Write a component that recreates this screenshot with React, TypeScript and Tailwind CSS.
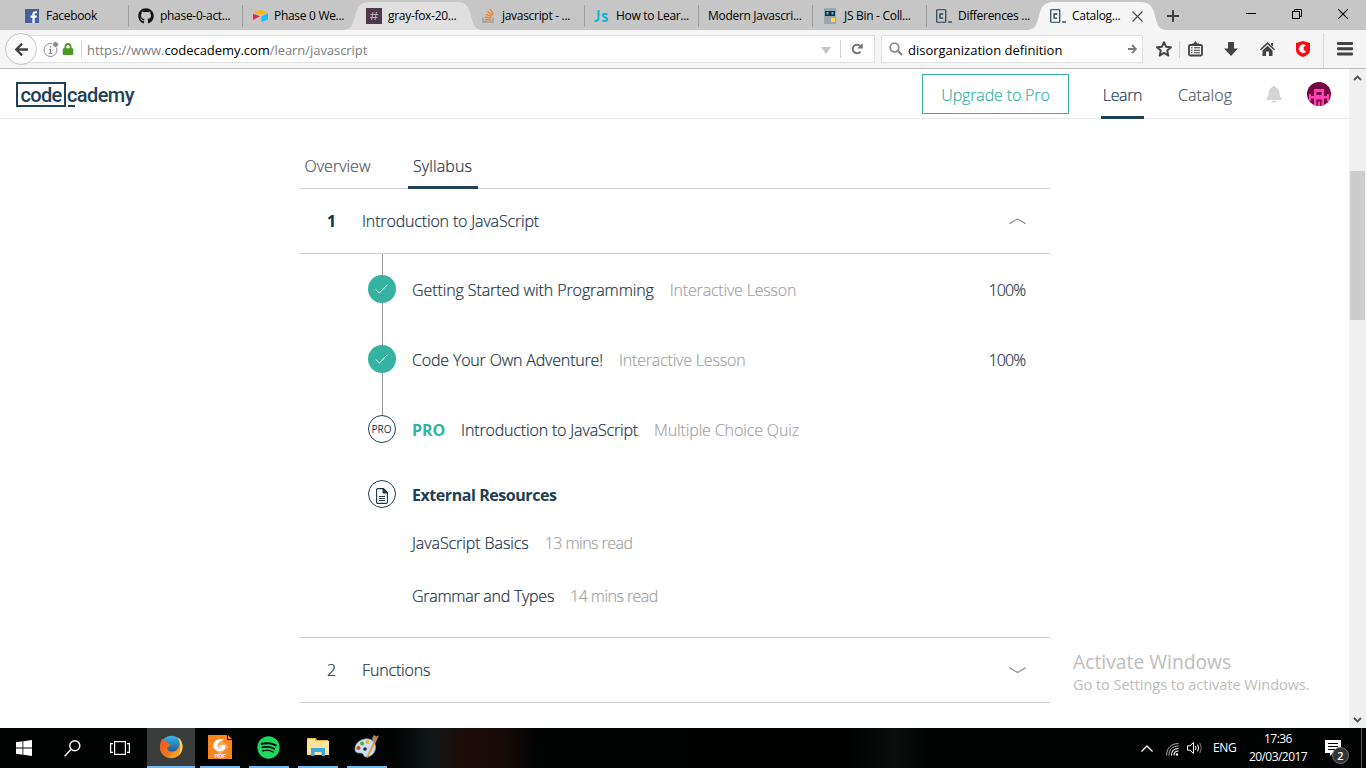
import React from "react";
import { FaArrowLeft, FaGithub, FaLock, FaSpotify } from "react-icons/fa";

const TAB_SHAPE = "M0 28C9 27 9 20 11 14C13 5 16 0 26 0H112C122 0 125 5 127 14C129 20 129 27 138 28Z";

function CodecademyMark() {
  return (
    <svg width="17" height="14" viewBox="0 0 17 14" fill="none" stroke="#204056">
      <rect x="0.75" y="0.75" width="9" height="12.5" rx=".5" strokeWidth="1.2" />
      <path d="M7.200 5H4V9.200H7.200" strokeWidth="1.3" />
      <path d="M12 13h4" strokeWidth="1.300" />
    </svg>
  );
}

type TabInfo = { label: string; icon?: React.ReactNode; shade?: string; close?: boolean };

const tabs: TabInfo[] = [
  {
    label: "Facebook",
    icon: (
      <svg className="-ml-[2px]" width="14" height="14" viewBox="0 0 14 14">
        <rect width="14" height="14" fill="#4460a0" />
        <path d="M9.7 14V8.8h1.9l.3-2.2H9.7V5.3c0-.6.2-1 1.1-1H12v-2A15 15 0 0 0 10.300 2.200C8.600 2.200 7.400 3.200 7.400 5.100v1.500H5.500v2.200h1.900V14z" fill="#fff" />
      </svg>
    ),
  },
  { label: "phase-0-act...", icon: <FaGithub className="-ml-[2px]" size={16} color="#181616" /> },
  {
    label: "Phase 0 We...",
    icon: (
      <svg width="15" height="12" viewBox="0 0 15 12">
        <path d="M1 2.500L7.500 0L14.500 2.500L7.500 5z" fill="#fcb400" />
        <path d="M8.300 6L15 3.600V9.600L8.300 12z" fill="#18bfff" />
        <path d="M0 3.700L7 6.200L0 10z" fill="#e8254f" />
      </svg>
    ),
  },
  {
    label: "gray-fox-20...",
    shade: "fill-[#dfdfdf]",
    icon: (
      <svg className="-ml-[2px]" width="16" height="16" viewBox="0 0 16 16">
        <rect width="16" height="16" fill="#4d394b" />
        <path d="M7 4L5.600 12M10.400 4L9 12M4.500 6.500H12M4 9.500H11.500" stroke="#b7a9b5" strokeWidth="1.100" />
      </svg>
    ),
  },
  {
    label: "javascript - ...",
    icon: (
      <svg className="-mt-[1px]" width="13" height="15" viewBox="0 0 13 15" fill="none">
        <path d="M1 9.500V14H11V9.500" stroke="#9a9c9f" strokeWidth="1.300" />
        <path d="M2.800 11.800H9.200M3 9.200L9.400 10M3.800 6.300L9.900 8.300M5.500 3.500L10.800 7.200M8 1.200L11.600 6.300" stroke="#f48024" strokeWidth="1.400" />
      </svg>
    ),
  },
  {
    label: "How to Lear...",
    icon: (
      <svg className="-ml-[3px]" width="16" height="14" viewBox="0 0 16 14" fill="none" stroke="#18b1d0" strokeWidth="2">
        <path d="M5.500 1V9.500C5.500 11.500 4.500 12 1.500 12" />
        <path d="M14.500 5.500C12 4.500 9.800 5 9.800 6.500C9.800 8.500 14.300 8 14.300 10.200C14.300 12.300 11.500 12.300 9.300 11.600" />
      </svg>
    ),
  },
  { label: "Modern Javascri..." },
  {
    label: "JS Bin - Coll...",
    icon: (
      <svg className="-ml-[1px]" width="12" height="16" viewBox="0 0 12 16">
        <rect width="12" height="16" fill="#9ba7ae" />
        <rect x="1" y="3" width="10" height="5" fill="#17303d" />
        <rect x="2.500" y="4" width="2" height="2.500" fill="#3fc1ee" />
        <rect x="7.500" y="4" width="2" height="2.500" fill="#3fc1ee" />
        <rect x="7" y="10" width="4" height="4" fill="#f7dc3b" />
      </svg>
    ),
  },
  { label: "Differences ...", icon: <CodecademyMark /> },
  { label: "Catalog...", icon: <CodecademyMark />, shade: "fill-[#f5f5f5]", close: true },
];

function BrowserTab({ tab, divider }: { tab: TabInfo; divider: boolean }) {
  return (
    <div className="relative flex h-[30px] w-[114px] shrink-0 items-center pt-[2px]">
      {tab.shade && (
        <svg className={"absolute -left-[12px] top-[2px] " + tab.shade} width="138" height="28" viewBox="0 0 138 28">
          <path d={TAB_SHAPE} />
        </svg>
      )}
      {divider && <span className="absolute right-[-1px] top-[5px] h-[22px] w-px bg-[#9d9d9d]" />}
      {tab.icon && <span className="relative ml-[10px] flex w-[17px] justify-center">{tab.icon}</span>}
      <span className={"relative whitespace-nowrap text-[12px] tracking-[-0.3px] text-black " + (tab.icon ? "ml-[5px]" : "ml-[10px]")}>{tab.label}</span>
      {tab.close && (
        <svg className="relative ml-[12px]" width="11" height="11" viewBox="0 0 11 11">
          <path d="M.5 .5L10.500 10.500M10.500 .5L.5 10.500" stroke="#4c4c4c" strokeWidth="1.200" />
        </svg>
      )}
    </div>
  );
}

function TabStrip() {
  return (
    <div className="flex h-[30px] bg-[#c6c6c6] pl-[14px]">
      {tabs.map((t, i) => (
        <BrowserTab key={t.label} tab={t} divider={i !== 2 && i !== 3 && i < 8} />
      ))}
      <div className="flex h-[30px] flex-1 items-center">
        <svg className="ml-[13px] mt-[2px]" width="12" height="12" viewBox="0 0 12 12">
          <path d="M6 0V12M0 6H12" stroke="#3f3f3f" strokeWidth="2" />
        </svg>
        <svg className="-mt-[2px] ml-[67px]" width="10" height="10" viewBox="0 0 10 10"><path d="M0 4.500H10" stroke="#000" /></svg>
        <svg className="-mt-[2px] ml-[36px]" width="10" height="10" viewBox="0 0 10 10" fill="none" stroke="#000">
          <rect x=".5" y="2.500" width="7" height="7" />
          <path d="M2.500 2.500V.5H9.500V7.500H7.500" />
        </svg>
        <svg className="-mt-[2px] ml-[36px]" width="10" height="10" viewBox="0 0 10 10"><path d="M.2 .2L9.800 9.800M9.800 .2L.2 9.800" stroke="#000" strokeWidth="1.100" /></svg>
      </div>
    </div>
  );
}

function Toolbar() {
  return (
    <div className="flex h-[39px] items-start border-b border-[#bcbcbc] bg-[#f5f5f5] pl-[5px] pt-[3px]">
      <div className="relative z-10 flex size-[32px] shrink-0 items-center justify-center rounded-full border border-[#c6c6c6] bg-[#fafafa]">
        <FaArrowLeft size={15} color="#404040" />
      </div>
      <div className="-ml-[10px] mt-[2px] flex h-[28px] w-[848px] shrink-0 items-center border border-[#e0e0e0] bg-white pl-[14px]">
        <svg className="mt-[1px]" width="18" height="18" viewBox="0 0 18 18" fill="none">
          <circle cx="8.500" cy="9" r="6.500" stroke="#8e8e8e" />
          <path d="M8.500 8V12.500M7 8.300H9M6.800 12.300H10.200M8.500 5V6.500" stroke="#8e8e8e" strokeWidth="1.300" />
          <circle cx="13.500" cy="3.500" r="3" fill="#8a8a8a" stroke="#fff" />
        </svg>
        <FaLock className="ml-[2px]" size={12} color="#4c9a22" />
        <span className="ml-[7px] h-[18px] w-px bg-[#d0d0d0]" />
        <span className="ml-[5px] whitespace-nowrap pt-[3px] text-[13px] tracking-[-0.05px] text-[#7d7d7d]">
          https://www.<span className="text-black">codecademy.com</span>/learn/javascript
        </span>
        <svg className="ml-auto mt-[2px]" width="10" height="7" viewBox="0 0 10 7"><path d="M0 0H10L5 7z" fill="#c6c6c6" /></svg>
        <span className="ml-[9px] h-[18px] w-px bg-[#d0d0d0]" />
        <svg className="ml-[10px] mr-[11px]" width="12" height="12" viewBox="0 0 12 12">
          <path d="M9.500 8.600A4.300 4.300 0 1 1 9 2.800" fill="none" stroke="#737373" strokeWidth="1.900" />
          <path d="M11.800 0V5.500H6.200z" fill="#737373" />
        </svg>
      </div>
      <div className="ml-[6px] mt-[2px] flex h-[28px] w-[262px] shrink-0 items-center border border-[#e0e0e0] bg-white px-[7px]">
        <svg className="-mt-[1px]" width="14" height="14" viewBox="0 0 14 14" fill="none" stroke="#8a8a8a">
          <circle cx="5.500" cy="5.500" r="4.300" strokeWidth="1.800" />
          <path d="M8.700 8.700L13 13" strokeWidth="2.400" />
        </svg>
        <span className="ml-[5px] whitespace-nowrap pt-[3px] text-[13px] text-black">disorganization definition</span>
        <svg className="-mr-[2px] ml-auto" width="9" height="10" viewBox="0 0 9 10" fill="none" stroke="#7d7d7d" strokeWidth="1.800">
          <path d="M0 5H8M4 1L8 5L4 9" />
        </svg>
      </div>
      <div className="flex h-[35px] flex-1 items-center pb-[3px]">
        <svg className="ml-[13px]" width="16" height="16" viewBox="0 0 16 16" fill="none" stroke="#424242" strokeWidth="1.900" strokeLinejoin="round">
          <path d="M8 1.200L10 5.700L15 6.200L11.200 9.500L12.400 14.600L8 11.900L3.600 14.600L4.800 9.500L1 6.200L6 5.700z" />
        </svg>
        <span className="ml-[7px] h-[17px] w-px bg-[#cfcfcf]" />
        <svg className="ml-[8px]" width="15" height="16" viewBox="0 0 15 16" fill="none" stroke="#424242">
          <rect x="1" y="4" width="13" height="10.500" rx="1.200" strokeWidth="1.800" />
          <path d="M4 3.500H6L7.500 1.500L9 3.500H11" strokeWidth="1.800" />
          <path d="M3 6.800H4.500M6 6.800H12M3 9.300H4.500M6 9.300H12M3 11.800H4.500M6 11.800H12" strokeWidth="1.100" />
        </svg>
        <svg className="ml-[21px]" width="14" height="14" viewBox="0 0 14 14"><path d="M4 0.500Q4 0 4.500 0H9.500Q10 0 10 .5V6.500H14L7 14L0 6.500H4z" fill="#424242" /></svg>
        <svg className="ml-[22px]" width="15" height="14" viewBox="0 0 15 14" fill="#424242">
          <path d="M0 7.300L7.500 0L15 7.300L14 8.300L7.500 2.200L1 8.300z" />
          <path d="M2.500 8.500L7.500 3.800L12.500 8.500V14H9V9.500H6V14H2.500z" />
          <path d="M11 1H13V4.500L11 2.700z" />
        </svg>
        <svg className="ml-[21px]" width="14" height="16" viewBox="0 0 14 16">
          <path d="M7 0L14 2V9C14 12.500 10.500 15 7 16C3.500 15 0 12.500 0 9V2z" fill="#f80a12" />
          <path d="M9.800 10.800A4 4 0 1 1 9.800 4.700C6.500 4.500 6.500 10 9.800 10.800z" fill="#fff" stroke="#fff" strokeWidth=".6" />
        </svg>
        <span className="-mb-[2px] ml-[13px] h-[35px] w-px bg-[#d8d8d8]" />
        <svg className="ml-[13px]" width="16" height="14" viewBox="0 0 16 14" fill="#424242">
          <rect width="16" height="3" rx="1" /><rect y="5.200" width="16" height="3" rx="1" /><rect y="10.400" width="16" height="3" rx="1" />
        </svg>
      </div>
    </div>
  );
}

function SiteHeader() {
  return (
    <header className="flex h-[50px] items-start border-b border-[#e9e9e9] pl-[16px]">
      <div className="mt-[13px] flex font-['Roboto'] text-[20px] font-medium leading-[22px] text-[#204056]">
        <span className="flex h-[25px] w-[50px] justify-center border-2 border-[#204056] tracking-[-0.75px]">code</span>
        <span className="relative ml-[1px] mt-[2px] tracking-[-0.6px]">
          cademy
          <span className="absolute left-[1px] top-[21px] h-[2px] w-[7px] bg-[#204056]" />
        </span>
      </div>
      <nav className="ml-auto flex text-[16px] font-light [-webkit-text-stroke:0.2px]">
        <button className="mt-[5px] flex h-[40px] w-[147px] items-center justify-center whitespace-nowrap border border-[#35b2a0] pt-[2px] tracking-[-0.15px] text-[#35b2a0]">Upgrade to Pro</button>
        <a className="ml-[32px] flex h-[50px] w-[43px] items-center justify-center border-b-[3px] border-[#204056] pt-[5px] tracking-[-0.35px] text-[#204056]">Learn</a>
        <a className="ml-[33px] flex h-[50px] w-[56px] items-center justify-center pt-[2px] tracking-[0.1px] text-[#4d5763]">Catalog</a>
        <svg className="ml-[33px] mt-[17px]" width="16" height="18" viewBox="0 0 16 18" fill="#d3d4d6">
          <path d="M8 0C9 0 9.500 .6 9.500 1.300C12 2 13.400 4 13.400 6.500C13.400 10 14 11 15.500 12.300Q16 14 14.500 14H1.500Q0 14 .5 12.300C2 11 2.600 10 2.600 6.500C2.600 4 4 2 6.500 1.300C6.500 .6 7 0 8 0z" />
          <path d="M5.500 14.800H10.500A2.500 2 0 0 1 5.500 14.800z" />
        </svg>
        <svg className="ml-[25px] mr-[18px] mt-[13px]" width="24" height="24" viewBox="0 0 24 24">
          <clipPath id="avatar"><circle cx="12" cy="12" r="12" /></clipPath>
          <g clipPath="url(#avatar)">
            <rect width="24" height="24" fill="#75083f" />
            <path d="M7 7H17V14H20V12H22V19H20V16.500H17V24H14.500V17.500H9.500V24H7V16.500H4V19H2V12H4V14H7z" fill="#ff41b4" />
            <path d="M9.500 10H14.500V13H9.500z" fill="#75083f" />
            <path d="M11 19.500H13V24H11z" fill="#ff41b4" />
          </g>
        </svg>
      </nav>
    </header>
  );
}

function CheckDot() {
  return (
    <span className="relative flex size-[28px] shrink-0 items-center justify-center rounded-full bg-[#35b2a0]">
      <svg width="13" height="10" viewBox="0 0 13 10" fill="none" stroke="#fff" strokeWidth="1"><path d="M.5 5.300L4.300 9L12.500 .7" /></svg>
    </span>
  );
}

function SectionRow({ n, title, open }: { n: string; title: string; open?: boolean }) {
  return (
    <div className="flex h-[65px] items-center border-b border-[#d0d0d0] pl-[27.5px] pr-[24px]">
      <span className={"w-[35px] " + (open ? "font-bold" : "font-light")}>{n}</span>
      <span className="tracking-[-0.16px]">{title}</span>
      <svg className="ml-auto" width="17" height="7" viewBox="0 0 17 7" fill="none" stroke="#999" strokeWidth="1.400">
        <path d={open ? "M.3 5.600L8.500 1L16.700 5.600" : "M.3 .7L8.500 5.500L16.700 .7"} />
      </svg>
    </div>
  );
}

function Lesson({ title, kind, percent, track = "" }: { title: string; kind: string; percent: string; track?: string }) {
  return (
    <div className="flex h-[70px] items-center pl-[68px] pr-[24px]">
      <CheckDot />
      <span className={"ml-[16.5px] pt-[2px] " + track}>{title}</span>
      <span className="ml-[16px] pt-[2px] tracking-[-0.19px] text-[#a3a3a3]">{kind}</span>
      <span className="ml-auto pt-[2px] tracking-[-0.8px]">{percent}</span>
    </div>
  );
}

function Resource({ title, time, className, track }: { title: string; time: string; className: string; track: string }) {
  return (
    <div className={"flex items-center pl-[112.5px] leading-[24px] " + className}>
      <span className={track}>{title}</span>
      <span className="ml-[16px] tracking-[-0.55px] text-[#a3a3a3]">{time}</span>
    </div>
  );
}

function Syllabus() {
  return (
    <section className="mx-auto w-[750px] whitespace-nowrap pt-[25px] text-[16px] font-light text-[#1c3347] [-webkit-text-stroke:0.2px]">
      <div className="flex h-[45px] border-b border-[#d0d0d0]">
        <span className="flex h-[43px] w-[76px] items-center justify-center text-[#4d5763]">Overview</span>
        <span className="ml-[32px] flex h-[45px] w-[70px] items-center justify-center border-b-[3px] border-[#204056] pt-[1px] tracking-[0.1px]">Syllabus</span>
      </div>
      <SectionRow n="1" title="Introduction to JavaScript" open />
      <div className="relative h-[384px] border-b border-[#d0d0d0]">
        <span className="absolute left-[82px] top-0 h-[161px] w-px bg-[#9b9b9b]" />
        <Lesson title="Getting Started with Programming" kind="Interactive Lesson" percent="100%" track="tracking-[-0.1px]" />
        <Lesson title="Code Your Own Adventure!" kind="Interactive Lesson" percent="100%" track="tracking-[-0.18px]" />
        <div className="flex h-[70px] items-center pl-[68px]">
          <span className="relative flex size-[28px] items-center justify-center rounded-full border border-[#204056] bg-white text-[10px] font-normal [-webkit-text-stroke:0px]">PRO</span>
          <span className="ml-[16.5px] pt-[2px] font-bold tracking-[-0.1px] text-[#35b2a0] [-webkit-text-stroke:0px]">PRO</span>
          <span className="ml-[16px] pt-[2px] tracking-[-0.16px]">Introduction to JavaScript</span>
          <span className="ml-[16px] pt-[2px] tracking-[-0.13px] text-[#a3a3a3]">Multiple Choice Quiz</span>
        </div>
        <div className="flex h-[60px] items-center pl-[68px]">
          <span className="flex size-[28px] items-center justify-center rounded-full border border-[#204056]">
            <svg className="mt-[3px]" width="12" height="16" viewBox="0 0 12 16" fill="none" stroke="#1c3347">
              <path d="M.6 2Q.6 .6 2 .6H7.500L11.400 4.500V14Q11.400 15.400 10 15.400H2Q.6 15.400 .6 14z" strokeWidth="1.100" />
              <path d="M7 .6V5H11.400z" fill="#1c3347" />
              <path d="M3 8.500H9M3 10.500H9M3 12.500H9" />
            </svg>
          </span>
          <span className="ml-[16.5px] pt-[2px] font-bold tracking-[-0.44px] text-[#204056] [-webkit-text-stroke:0px]">External Resources</span>
        </div>
        <Resource title="JavaScript Basics" time="13 mins read" className="mt-[7px]" track="tracking-[-0.08px]" />
        <Resource title="Grammar and Types" time="14 mins read" className="mt-[29px]" track="tracking-[-0.26px]" />
      </div>
      <SectionRow n="2" title="Functions" />
    </section>
  );
}

function Scrollbar() {
  return (
    <div className="flex w-[17px] shrink-0 flex-col items-center bg-[#f0f0f0]">
      <svg className="mt-[6px]" width="9" height="6" viewBox="0 0 9 6"><path d="M1 5L4.500 1.500L8 5" fill="none" stroke="#505050" strokeWidth="1.800" /></svg>
      <div className="mt-[90px] h-[149px] w-[15px] bg-[#cdcdcd]" />
      <svg className="mb-[5px] mt-auto" width="9" height="6" viewBox="0 0 9 6"><path d="M1 1L4.500 4.500L8 1" fill="none" stroke="#505050" strokeWidth="1.800" /></svg>
    </div>
  );
}

function FirefoxIcon() {
  return (
    <svg width="24" height="24" viewBox="0 0 24 24">
      <defs>
        <linearGradient id="fox" x1="0" y1="0" x2="1" y2="1"><stop offset="0" stopColor="#e8541b" /><stop offset=".6" stopColor="#f07b1c" /><stop offset="1" stopColor="#ffd83a" /></linearGradient>
        <linearGradient id="globe" x1="0" y1="0" x2="0" y2="1"><stop offset="0" stopColor="#3bb4e8" /><stop offset="1" stopColor="#153a7e" /></linearGradient>
      </defs>
      <circle cx="12.500" cy="11.500" r="10.800" fill="url(#globe)" />
      <path d="M20 3C25 8 25 17 19 21C12 26 2 22 1 14C.5 9 2 5 3.500 3.500L5 6L8.500 5.500L8 8.500L11.500 9L10 11.500L8 12.500C8 16 13 18 17 15.500C20.500 12.500 21.500 7 20 3z" fill="url(#fox)" />
      <path d="M18.500 2C24.500 6 25 15 20 20C22 13 21.500 7 18.500 2z" fill="#ffd94d" />
    </svg>
  );
}

const apps: { name: string; icon: React.ReactNode }[] = [
  {
    name: "pdf",
    icon: (
      <svg width="24" height="24" viewBox="0 0 24 24">
        <path d="M0 0H19V5H24V24H0z" fill="#f7861f" />
        <path d="M20 0L24 4H20z" fill="#f7861f" />
        <path d="M4 12L12 4L21 12L12 20z" fill="#f9a658" />
        <path d="M17 4.500C10 2.500 5 6 5.500 11C6 16 13 18 16 14.500C17.500 13 17.500 11.500 17.500 10H12.500L11 12.500H14C12.500 14.500 9.500 13.500 9.500 10.500C9.500 7.500 13 5.500 17 4.500z" fill="#fff" />
        <text x="6.500" y="23" fontSize="5.600" fontWeight="700" fill="#fff" fontFamily="Liberation Sans, sans-serif">PDF</text>
      </svg>
    ),
  },
  { name: "music", icon: <span className="-ml-[1px]"><FaSpotify size={23} color="#1ed760" /></span> },
  {
    name: "files",
    icon: (
      <svg className="-mt-[1px]" width="22" height="20" viewBox="0 0 22 20">
        <path d="M0 1H9L10 3H21V17H0z" fill="#e9b93f" />
        <path d="M0 4H22V18H0z" fill="#fde49a" />
        <path d="M1 2H8V4H21V6H1z" fill="#fde49a" />
        <path d="M4 11H18V19H14.500V15H7.500V19H4z" fill="#35a9e0" />
      </svg>
    ),
  },
  {
    name: "paint",
    icon: (
      <svg className="-ml-[1px]" width="25" height="24" viewBox="0 0 25 24">
        <path d="M11 4C17 3 22 7 21.500 13C21 19 16 22 12 22C9 22 10 18 7 18C4 18 1 18 1 14C1 9 5 5 11 4z" fill="#c9dff0" stroke="#88aac5" strokeWidth=".7" />
        <circle cx="4.500" cy="13" r="2" fill="#dd3c32" /><circle cx="8" cy="8.500" r="2" fill="#57ad3b" /><circle cx="13.500" cy="7" r="2" fill="#f1b822" /><circle cx="11" cy="14" r="1.800" fill="#132b42" />
        <path d="M19.500 7L21.500 8L13.500 23L12.500 22z" fill="#ef9a2c" />
        <path d="M18 4L20 0L22.500 1.500L25 .5L21.500 8L19.500 7z" fill="#b98562" />
      </svg>
    ),
  },
];

function Taskbar() {
  return (
    <footer className="flex h-[40px] bg-[#020303] bg-[linear-gradient(90deg,#020303_0,#020303_395px,#101616_430px,#1d0b08_470px,#160c0a_505px,#020303_535px,#010202_845px,#0a0e0d_895px,#020303_930px)] text-white">
      <div className="flex w-[147px] shrink-0 items-center">
        <svg className="ml-[16px]" width="16" height="16" viewBox="0 0 16 16" fill="#fff"><path d="M0 2.200L6.500 1.300V7.500H0zM7.300 1.200L16 0V7.500H7.300zM0 8.400H6.500V14.700L0 13.800zM7.300 8.400H16V16L7.300 14.800z" /></svg>
        <svg className="ml-[32px]" width="17" height="17" viewBox="0 0 17 17" fill="none" stroke="#fff" strokeWidth="1.400"><circle cx="10.800" cy="5.800" r="5" /><path d="M7.200 9.300L.6 16.200" /></svg>
        <svg className="ml-[29px]" width="20" height="14" viewBox="0 0 20 14" fill="none" stroke="#fff" strokeWidth="1.200"><rect x="4.600" y=".6" width="10.800" height="12.800" /><path d="M3 2.600H.6V11.400H3M17 2.600H19.400V11.400H17" /></svg>
      </div>
      <div className="flex w-[48px] shrink-0 items-center justify-center border-b-2 border-[#76b9ed] bg-[#3a3b3b]"><FirefoxIcon /></div>
      <div className="ml-[5px] flex gap-[9px]">
        {apps.map((a) => (
          <div key={a.name} className="flex h-[40px] w-[40px] items-center justify-center border-b-2 border-[#76b9ed]">{a.icon}</div>
        ))}
      </div>
      <div className="ml-auto flex items-center text-[12px]">
        <svg width="12" height="7" viewBox="0 0 12 7"><path d="M.5 6.500L6 1L11.500 6.500" fill="none" stroke="#fff" strokeWidth="1.300" /></svg>
        <svg className="ml-[13px] mt-[3px]" width="13" height="13" viewBox="0 0 13 13" fill="none" stroke="#fff">
          <circle cx="11" cy="11.500" r="1.300" fill="#fff" stroke="none" />
          <path d="M8 12.500C8 9.500 9.500 8 12.500 8M5.500 12.500C5.500 8 8 5.500 12.500 5.500" strokeWidth="1.100" /><path d="M3 12.500C3 6.500 6.500 3 12.500 3M.6 12.500C.6 5 5 .6 12.500 .6" stroke="#b5b5b5" />
        </svg>
        <svg className="ml-[8px]" width="16" height="14" viewBox="0 0 16 14" fill="none" stroke="#fff">
          <path d="M.5 4.800H3L6.500 1.500V12.500L3 9.200H.5z" /><path d="M8.500 5Q9.700 7 8.500 9M10.600 3.500Q12.500 7 10.600 10.500" /><path d="M12.800 2Q15.800 7 12.800 12" stroke="#777" />
        </svg>
        <span className="ml-[10px] w-[24px] tracking-[-0.3px]">ENG</span>
        <div className="ml-[11px] flex w-[60px] flex-col items-center pb-[1px] leading-[18px] tracking-[-0.55px]"><span>17:36</span><span>20/03/2017</span></div>
        <div className="relative ml-[17px] mr-[15px] h-[26px] w-[21px]">
          <svg className="mt-[5px]" width="16" height="17" viewBox="0 0 16 17"><path d="M0 0H16V13H8L5 16V13H0z" fill="#fff" /><path d="M3 3.500H13M3 6.500H13M3 9.500H11" stroke="#000" strokeWidth="1.200" /></svg>
          <span className="absolute left-[7px] top-[12px] flex size-[17px] items-center justify-center rounded-full border border-[#777] bg-[#333] text-[11px] font-semibold leading-none">2</span>
        </div>
      </div>
      <div className="mr-[4px] w-px bg-[#5c5c5c]" />
    </footer>
  );
}

export default function App() {
  return (
    <div className="relative flex h-[768px] w-[1366px] flex-col overflow-hidden bg-white font-['Open_Sans',sans-serif]">
      <TabStrip />
      <Toolbar />
      <div className="flex min-h-0 flex-1">
        <main className="min-w-0 flex-1">
          <SiteHeader />
          <Syllabus />
        </main>
        <Scrollbar />
      </div>
      <Taskbar />
      <div className="absolute left-[1073px] top-[650px] flex flex-col whitespace-nowrap text-[#bdbdbd]">
        <span className="text-[19.3px] leading-[24px]">Activate Windows</span>
        <span className="text-[14.5px] leading-[22px] tracking-[-0.03px]">Go to Settings to activate Windows.</span>
      </div>
    </div>
  );
}
